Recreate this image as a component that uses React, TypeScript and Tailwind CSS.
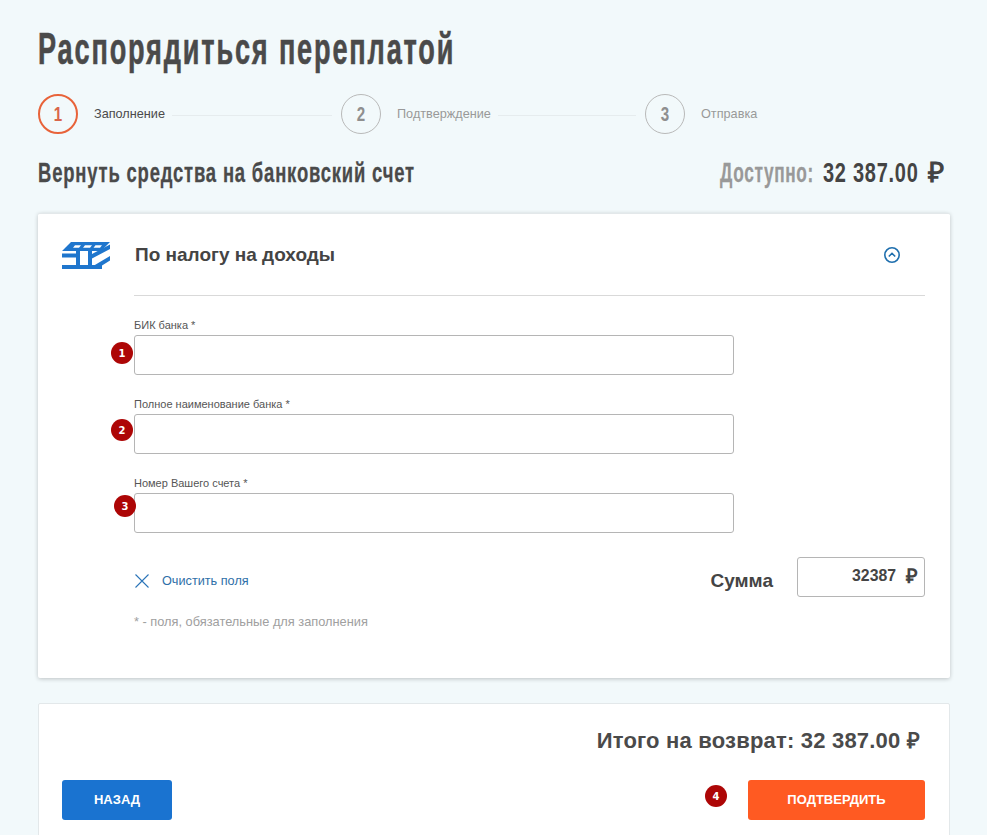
const cond = "inline-block whitespace-nowrap font-bold font-['Liberation_Sans',sans-serif]";

function Step({ n, label, active, line, width }: { n: number; label: string; active?: boolean; line?: boolean; width?: string }) {
  return (
    <div className={`flex items-center ${width ?? ""}`}>
      <div
        className={
          active
            ? "flex h-10 w-10 shrink-0 items-center justify-center rounded-full border-2 border-[#e8633a] text-[21px] text-[#d9664a]"
            : "flex h-10 w-10 shrink-0 items-center justify-center rounded-full border border-[#b9b9b9] text-[21px] text-[#8f8f8f]"
        }
      >
        <span className={`${cond} scale-x-[0.72]`}>{n}</span>
      </div>
      <span className={active ? "ml-4 pt-[2px] text-[12.7px] text-[#4a4a4a]" : "ml-4 pt-[2px] text-[12.7px] text-[#999999]"}>{label}</span>
      {line && <div className="ml-[7px] mr-[9px] mt-[2px] h-px flex-1 bg-[#e6ecee]" />}
    </div>
  );
}

function Badge({ n }: { n: number }) {
  return (
    <span className="flex h-[22px] w-[22px] items-center justify-center rounded-full bg-[#ad0606] text-[10px] font-bold text-white font-['DejaVu_Sans',sans-serif]">
      {n}
    </span>
  );
}

function Field({ label, n, badgeClass }: { label: string; n: number; badgeClass: string }) {
  return (
    <div className="relative">
      <div className="h-[17px] text-[11px] leading-[14px] text-[#555555]">{label}</div>
      <div className="h-10 w-[600px] rounded-[3px] border border-[#b5b5b5] bg-white" />
      <div className={`absolute ${badgeClass}`}>
        <Badge n={n} />
      </div>
    </div>
  );
}

export default function App() {
  return (
    <div className="h-[835px] overflow-hidden bg-[#f2f9fb] pl-[38px] pr-[37px] font-['Liberation_Sans',sans-serif]">
      <div className="h-[74px] pt-[24px]">
        <h1 className={`${cond} origin-left scale-x-[0.616] text-[44px] leading-[50px] tracking-[3px] text-[#4a4a4a] [-webkit-text-stroke:0.6px_#4a4a4a]`}>
          Распорядиться переплатой
        </h1>
      </div>
      <div className="mt-[20px] flex">
        <Step n={1} label="Заполнение" active line width="w-[303px]" />
        <Step n={2} label="Подтверждение" line width="w-[304px]" />
        <Step n={3} label="Отправка" />
      </div>
      <div className="mt-[24px] flex items-center justify-between pr-[6px]">
        <h2 className={`${cond} origin-left scale-x-[0.683] text-[27px] leading-[30px] tracking-[1.200px] text-[#4a4a4a] [-webkit-text-stroke:0.3px_#4a4a4a]`}>
          Вернуть средства на банковский счет
        </h2>
        <div className="flex items-baseline text-[27px] leading-[30px]">
          <span className="w-[103px]">
            <span className={`${cond} origin-left scale-x-[0.64] tracking-[1px] text-[#999999] [-webkit-text-stroke:0.3px_#999999]`}>Доступно:</span>
          </span>
          <span className="w-[105px]">
            <span className={`${cond} origin-left scale-x-[0.74] tracking-[1px] text-[#444444]`}>32 387.00</span>
          </span>
          <span className="text-[28px] font-bold text-[#444444]">₽</span>
        </div>
      </div>

      <section className="mt-[25px] h-[465px] rounded-[2px] border-t border-[#e3e8ea] bg-white pl-[24px] pr-[25px] shadow-[0_1px_4px_rgba(0,0,0,0.22)]">
        <div className="flex h-[81px] items-start pt-[22px]">
          <svg width="48" height="28" viewBox="0 0 48 28" className="mt-[6px] shrink-0" fill="#1f76cd">
            <path
              fillRule="evenodd"
              d="M9 0h39l-9 9H0z M13 3.200 11 5.800h6l2-2.600z M23 3.200l-2 2.600h7l2-2.600z M33.500 3.200l-2 2.600h6.500l2-2.600z"
            />
            <path d="M0 11.500h14.500v4H0zM0 23h40v4H0zM14 9h4v15h-4zM26 9h4v15h-4z" />
            <path d="M30 12 48 2.500v4.500l-18 9.500zM32 23.500 48 14v4.500L40 23.500z" />
          </svg>
          <div className="ml-[25px] mt-[1px] flex-1 text-[19px] font-bold leading-[36px] text-[#444444]">По налогу на доходы</div>
          <svg width="18" height="18" viewBox="0 0 18 18" className="mr-[24px] mt-[10px]" fill="none" stroke="#1f6fae" strokeWidth="1.600">
            <circle cx="9" cy="9" r="7.200" />
            <path d="M5.800 10.500 9 7.300l3.200 3.200" />
          </svg>
        </div>
        <div className="ml-[72px] border-t border-[#d9d9d9]">
          <div className="mt-[22px] flex flex-col gap-[22px]">
            <Field label="БИК банка *" n={1} badgeClass="left-[-23px] top-[24px]" />
            <Field label="Полное наименование банка *" n={2} badgeClass="left-[-23px] top-[22px]" />
            <Field label="Номер Вашего счета *" n={3} badgeClass="left-[-20px] top-[19px]" />
          </div>
          <div className="mt-[24px] flex items-center justify-between">
            <div className="flex items-center pt-[9px]">
              <svg width="16" height="16" viewBox="0 0 16 16" fill="none" stroke="#2b74b8" strokeWidth="1.100">
                <path d="M1.500 1.500l13 13M14.500 1.500l-13 13" />
              </svg>
              <span className="ml-[12px] text-[12.7px] text-[#2f6fa8]">Очистить поля</span>
            </div>
            <div className="flex items-center">
              <span className="pt-[8px] text-[19px] font-bold text-[#444444]">Сумма</span>
              <div className="ml-[24px] flex h-10 w-[128px] items-center justify-end rounded-[3px] border border-[#b5b5b5] pb-[2px] pr-[6px] text-[15.800px] font-bold text-[#444444]">
                <span>32387</span>
                <span className="ml-[10px] text-[20px]">₽</span>
              </div>
            </div>
          </div>
          <div className="mt-[15px] text-[12.800px] text-[#a0a0a0]">* - поля, обязательные для заполнения</div>
        </div>
      </section>

      <section className="mt-[25px] h-[160px] rounded-[2px] border border-[#e3e8ea] bg-white pl-[23px] pr-[24px]">
        <div className="mt-[24px] pr-[5px] text-right text-[22px] font-bold leading-[26px] tracking-[0.2px] text-[#4a4a4a]">
          Итого на возврат: 32 387.00 ₽
        </div>
        <div className="mt-[26px] flex items-start justify-between">
          <button className="h-10 w-[110px] rounded-[3px] bg-[#1a73d0] text-[13px] font-bold text-white">НАЗАД</button>
          <div className="flex items-start">
            <span className="mt-[5px]">
              <Badge n={4} />
            </span>
            <button className="ml-[21px] h-10 w-[177px] rounded-[3px] bg-[#ff5a22] text-[13px] font-bold text-white">
              ПОДТВЕРДИТЬ
            </button>
          </div>
        </div>
      </section>
    </div>
  );
}
